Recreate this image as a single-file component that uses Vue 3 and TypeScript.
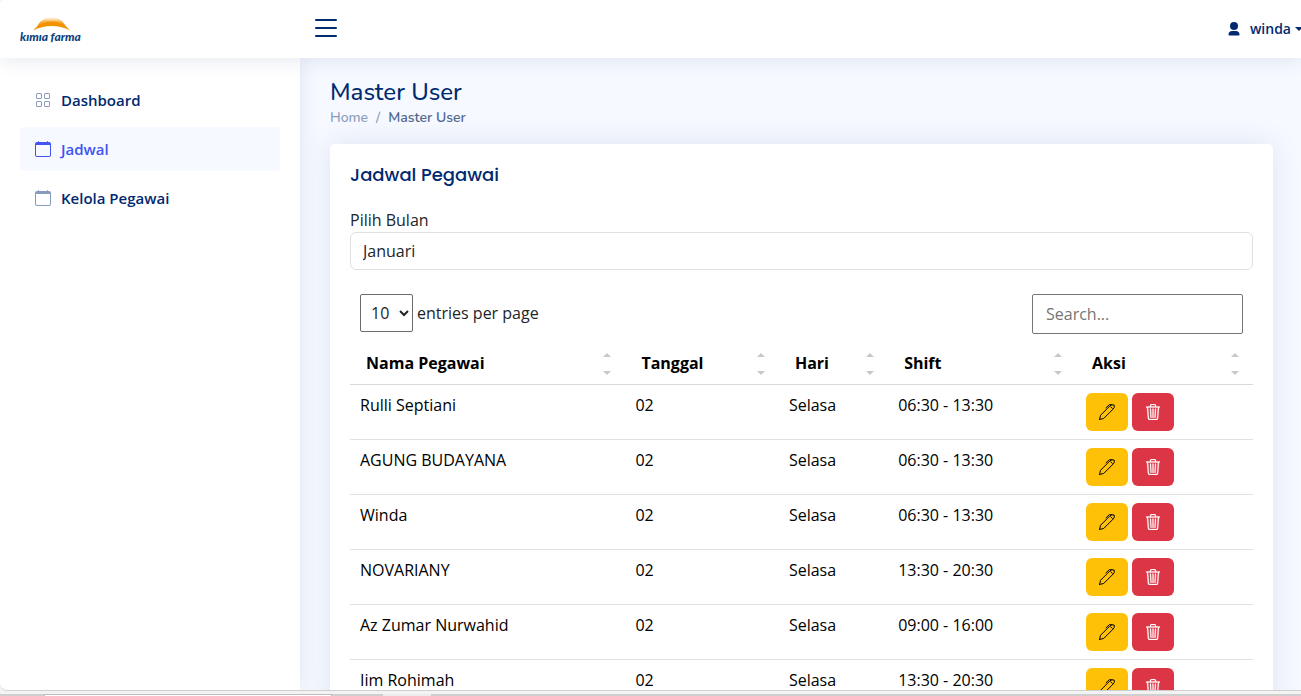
<script setup lang="ts">
import { ref } from 'vue'

interface Shift {
  name: string
  date: string
  day: string
  hours: string
}

const columns: string[] = ['Nama Pegawai', 'Tanggal', 'Hari', 'Shift', 'Aksi']

const shifts: Shift[] = [
  { name: 'Rulli Septiani', date: '02', day: 'Selasa', hours: '06:30 - 13:30' },
  { name: 'AGUNG BUDAYANA', date: '02', day: 'Selasa', hours: '06:30 - 13:30' },
  { name: 'Winda', date: '02', day: 'Selasa', hours: '06:30 - 13:30' },
  { name: 'NOVARIANY', date: '02', day: 'Selasa', hours: '13:30 - 20:30' },
  { name: 'Az Zumar Nurwahid', date: '02', day: 'Selasa', hours: '09:00 - 16:00' },
  { name: 'Iim Rohimah', date: '02', day: 'Selasa', hours: '13:30 - 20:30' },
]

const month = ref('Januari')
const perPage = ref('10')
const query = ref('')
const sidebarOpen = ref(true)
</script>

<template>
  <div class="window">
    <div class="viewport">
      <header class="header">
        <a href="#" class="logo" aria-label="kimia farma">
          <svg width="66" height="30" viewBox="0 0 66 30">
            <defs>
              <linearGradient id="glow" x1="0" y1="1" x2="0" y2="0">
                <stop offset="0.2" stop-color="#f39200" />
                <stop offset="0.6" stop-color="#f8b95c" />
                <stop offset="1" stop-color="#fdeac8" stop-opacity="0.4" />
              </linearGradient>
            </defs>
            <path d="M17 13C22 0 41 0 46 13C38 8 25 8 17 13Z" fill="url(#glow)" />
            <path d="M13 16.500C23 4.500 41 4.500 50 16.500C40 10.500 24 10.500 13 16.500Z" fill="#f39200" />
            <text x="0" y="27" class="logo-text">kımıa farma</text>
          </svg>
        </a>
        <button class="toggle" type="button" aria-label="Menu" @click="sidebarOpen = !sidebarOpen">
          <svg width="32" height="32" viewBox="0 0 16 16" fill="currentColor">
            <path d="M2.500 12a.5.5 0 0 1 .5-.5h10a.5.5 0 0 1 0 1H3a.5.5 0 0 1-.5-.5m0-4a.5.5 0 0 1 .5-.5h10a.5.5 0 0 1 0 1H3a.5.5 0 0 1-.5-.5m0-4a.5.5 0 0 1 .5-.5h10a.5.5 0 0 1 0 1H3a.5.5 0 0 1-.5-.5" />
          </svg>
        </button>
        <button class="profile" type="button">
          <svg width="16" height="16" viewBox="0 0 16 16" fill="currentColor">
            <circle cx="8" cy="5" r="4" />
            <path d="M2.500 13.500C2.500 11.200 4 10 6 10h4c2 0 3.500 1.200 3.500 3.500v.3c0 .5-.3.7-.7.700H3.200c-.4 0-.7-.2-.7-.7z" />
          </svg>
          <span>winda</span>
          <span class="caret"></span>
        </button>
      </header>

      <div class="body">
        <nav v-if="sidebarOpen" class="sidebar">
          <a href="#" class="nav-link">
            <svg width="16" height="16" viewBox="0 0 16 16" fill="currentColor">
              <path d="M1 2.500A1.500 1.500 0 0 1 2.500 1h3A1.500 1.500 0 0 1 7 2.500v3A1.500 1.500 0 0 1 5.500 7h-3A1.500 1.500 0 0 1 1 5.500zM2.500 2a.5.5 0 0 0-.5.5v3a.5.5 0 0 0 .5.5h3a.5.5 0 0 0 .5-.5v-3a.5.5 0 0 0-.5-.5zm6.500.5A1.500 1.500 0 0 1 10.500 1h3A1.500 1.500 0 0 1 15 2.500v3A1.500 1.500 0 0 1 13.500 7h-3A1.500 1.500 0 0 1 9 5.500zm1.500-.5a.5.5 0 0 0-.5.5v3a.5.5 0 0 0 .5.5h3a.5.5 0 0 0 .5-.5v-3a.5.5 0 0 0-.5-.5zM1 10.500A1.500 1.500 0 0 1 2.500 9h3A1.500 1.500 0 0 1 7 10.500v3A1.500 1.500 0 0 1 5.500 15h-3A1.500 1.500 0 0 1 1 13.500zm1.500-.5a.5.5 0 0 0-.5.5v3a.5.5 0 0 0 .5.5h3a.5.5 0 0 0 .5-.5v-3a.5.5 0 0 0-.5-.5zm6.500.5A1.500 1.500 0 0 1 10.500 9h3a1.500 1.500 0 0 1 1.500 1.500v3a1.500 1.500 0 0 1-1.500 1.500h-3A1.500 1.500 0 0 1 9 13.500zm1.500-.5a.5.5 0 0 0-.5.5v3a.5.5 0 0 0 .5.5h3a.5.5 0 0 0 .5-.5v-3a.5.5 0 0 0-.5-.5z" />
            </svg>
            <span>Dashboard</span>
          </a>
          <a href="#" class="nav-link active">
            <svg width="16" height="16" viewBox="0 0 16 16" fill="currentColor">
              <path d="M3.500 0a.5.5 0 0 1 .5.500V1h8V.5a.5.5 0 0 1 1 0V1h1a2 2 0 0 1 2 2v11a2 2 0 0 1-2 2H2a2 2 0 0 1-2-2V3a2 2 0 0 1 2-2h1V.5a.5.5 0 0 1 .5-.5M1 4v10a1 1 0 0 0 1 1h12a1 1 0 0 0 1-1V4z" />
            </svg>
            <span>Jadwal</span>
          </a>
          <a href="#" class="nav-link">
            <svg width="16" height="16" viewBox="0 0 16 16" fill="currentColor">
              <path d="M3.500 0a.5.5 0 0 1 .5.500V1h8V.5a.5.5 0 0 1 1 0V1h1a2 2 0 0 1 2 2v11a2 2 0 0 1-2 2H2a2 2 0 0 1-2-2V3a2 2 0 0 1 2-2h1V.5a.5.5 0 0 1 .5-.5M1 4v10a1 1 0 0 0 1 1h12a1 1 0 0 0 1-1V4z" />
            </svg>
            <span>Kelola Pegawai</span>
          </a>
        </nav>

        <main class="main">
          <h1>Master User</h1>
          <div class="breadcrumb">
            <a href="#">Home</a>
            <span class="slash">/</span>
            <span class="current">Master User</span>
          </div>

          <section class="card">
            <h2>Jadwal Pegawai</h2>
            <label class="field-label" for="month">Pilih Bulan</label>
            <select id="month" v-model="month" class="month">
              <option>Januari</option>
            </select>

            <div class="table-top">
              <label class="per-page">
                <select v-model="perPage">
                  <option>10</option>
                </select>
                <span>entries per page</span>
              </label>
              <input v-model="query" type="search" class="search" placeholder="Search..." aria-label="Search" />
            </div>

            <table>
              <colgroup>
                <col class="col-name" />
                <col class="col-date" />
                <col class="col-day" />
                <col class="col-shift" />
                <col class="col-action" />
              </colgroup>
              <thead>
                <tr>
                  <th v-for="column in columns" :key="column" scope="col">
                    <button type="button" class="sorter">
                      <span>{{ column }}</span>
                      <svg width="8" height="24" viewBox="0 0 8 24" fill="#c9c9c9">
                        <path d="M0 6L4 2L8 6ZM0 20H8L4 24Z" />
                      </svg>
                    </button>
                  </th>
                </tr>
              </thead>
              <tbody>
                <tr v-for="shift in shifts" :key="shift.name">
                  <td>{{ shift.name }}</td>
                  <td>{{ shift.date }}</td>
                  <td>{{ shift.day }}</td>
                  <td>{{ shift.hours }}</td>
                  <td>
                    <div class="actions">
                      <button type="button" class="btn edit" aria-label="Edit">
                        <svg width="16" height="16" viewBox="0 0 16 16" fill="none" stroke="currentColor" stroke-linejoin="round" stroke-linecap="round">
                          <path d="M0.600 15.400L1.500 11.300L11 1.800L12.700 0.700L15.200 1.100L15.300 3.300L14.200 5L4.700 14.500L0.600 15.400ZM7 3.800L10.300 0.700L12.700 0.900M11.700 2.800L13.200 4.300" />
                        </svg>
                      </button>
                      <button type="button" class="btn delete" aria-label="Hapus">
                        <svg width="16" height="16" viewBox="0 0 16 16" fill="currentColor" stroke="currentColor" stroke-width="0.300">
                          <path d="M6.500 1h3a.5.5 0 0 1 .5.500v1H6v-1a.5.5 0 0 1 .5-.5M11 2.500v-1A1.500 1.500 0 0 0 9.500 0h-3A1.500 1.500 0 0 0 5 1.500v1H1.500a.5.5 0 0 0 0 1h.538l.853 10.660A2 2 0 0 0 4.885 16h6.230a2 2 0 0 0 1.994-1.840l.853-10.660h.538a.5.5 0 0 0 0-1zm1.958 1-.846 10.580a1 1 0 0 1-.997.920h-6.230a1 1 0 0 1-.997-.920L3.042 3.500zm-7.487 1a.5.5 0 0 1 .528.470l.5 8.500a.5.5 0 0 1-.998.060L5 5.030a.5.5 0 0 1 .470-.530zm5.058 0a.5.5 0 0 1 .470.530l-.5 8.500a.5.5 0 1 1-.998-.060l.5-8.500a.5.5 0 0 1 .528-.470M8 4.500a.5.5 0 0 1 .5.500v8.500a.5.5 0 0 1-1 0V5a.5.5 0 0 1 .5-.5" />
                        </svg>
                      </button>
                    </div>
                  </td>
                </tr>
              </tbody>
            </table>
          </section>
        </main>
      </div>
    </div>
    <div class="taskbar"><span class="tab"></span><span class="tab-light"></span></div>
  </div>
</template>

<style>
body {
  margin: 0;
  overflow: hidden;
}
</style>

<style scoped>
* {
  box-sizing: border-box;
}

.window {
  display: flex;
  flex-direction: column;
  height: 100vh;
  background: #f3f3f3;
  font-family: "Open Sans", "Noto Sans", sans-serif;
  font-size: 16px;
  line-height: 24px;
  color: #212529;
}

.viewport {
  display: flex;
  flex: 1;
  flex-direction: column;
  min-height: 0;
  overflow: hidden;
  background: #f6f9ff;
  border-bottom: 1px solid #cfcfcf;
  border-radius: 4px 0 0 8px;
}

.taskbar {
  display: flex;
  flex: none;
  height: 2px;
  margin-top: 3px;
  padding-left: 44px;
  background: #cfcfcf;
}

.tab {
  width: 288px;
  margin-right: 51px;
  background: #fff;
  border: 1px solid #bdbdbd;
  border-bottom: 0;
}

.tab-light {
  width: 48px;
  background: #ececec;
}

button,
select,
input {
  font: inherit;
  color: inherit;
}

svg {
  display: block;
  flex: none;
}

a {
  text-decoration: none;
}

.header {
  position: relative;
  z-index: 2;
  display: flex;
  flex: none;
  align-items: center;
  height: 58px;
  padding-left: 20px;
  background: #fff;
  box-shadow: 0 2px 20px rgba(1, 41, 112, 0.1);
}

.logo {
  width: 290px;
}

.logo-text {
  font: italic 900 12px Lato, "Open Sans", sans-serif;
  fill: #0d3f7f;
}

.toggle {
  margin-bottom: 2px;
  padding: 0;
  color: #012970;
  background: none;
  border: 0;
}

.profile {
  display: flex;
  align-items: center;
  height: 24px;
  margin-left: auto;
  padding: 0;
  font-size: 14px;
  font-weight: 600;
  color: #012970;
  background: none;
  border: 0;
}

.profile svg {
  margin-right: 8px;
}

.caret {
  width: 6px;
  height: 4px;
  margin-left: 4px;
  background: currentColor;
  clip-path: polygon(0 0, 100% 0, 100% 50%, 66% 100%);
}

.body {
  display: flex;
  flex: 1;
  min-height: 0;
}

.sidebar {
  z-index: 1;
  display: flex;
  flex: none;
  flex-direction: column;
  gap: 5px;
  width: 300px;
  padding: 20px;
  background: #fff;
  box-shadow: 0 0 20px rgba(1, 41, 112, 0.1);
}

.nav-link {
  display: flex;
  gap: 10px;
  align-items: center;
  height: 44px;
  padding: 0 15px;
  font-size: 15px;
  font-weight: 600;
  color: #012970;
  border-radius: 4px;
}

.nav-link svg {
  color: #899bbd;
}

.nav-link.active,
.nav-link.active svg {
  color: #4154f1;
}

.nav-link.active {
  background: #f6f9ff;
}

.main {
  flex: 1;
  min-width: 0;
  padding: 20px 28px 0 30px;
}

h1 {
  margin: 0;
  font-family: Nunito, "Open Sans", sans-serif;
  font-size: 24px;
  font-weight: 500;
  line-height: 29px;
  color: #012970;
}

.breadcrumb {
  display: flex;
  gap: 8px;
  font-family: Nunito, "Open Sans", sans-serif;
  font-size: 14px;
  font-weight: 500;
  line-height: 21px;
  color: #899bbd;
}

.breadcrumb a {
  color: #899bbd;
}

.current {
  font-weight: 600;
  color: #51678f;
}

.card {
  margin-top: 16px;
  padding: 0 20px 20px;
  background: #fff;
  border-radius: 5px;
  box-shadow: 0 0 30px rgba(1, 41, 112, 0.1);
}

h2 {
  margin: 0;
  padding: 20px 0 22px;
  font-family: Poppins, Inter, sans-serif;
  font-size: 18px;
  font-weight: 500;
  line-height: 22px;
  color: #012970;
}

.field-label {
  display: block;
}

.month {
  display: block;
  width: 100%;
  height: 38px;
  padding: 0 12px;
  appearance: none;
  background: #fff;
  border: 1px solid #dee2e6;
  border-radius: 6px;
}

.table-top {
  display: flex;
  align-items: flex-start;
  justify-content: space-between;
  padding: 24px 10px 8px;
}

.per-page {
  display: flex;
  gap: 4px;
  align-items: center;
}

.per-page select {
  width: 53px;
  height: 38px;
  padding: 0 0 0 6px;
  background: #fff;
  border: 1px solid #6b6b6b;
  border-radius: 2px;
}

.search {
  width: 211px;
  height: 40px;
  padding: 0 13px;
  background: #fff;
  border: 1px solid #767676;
  border-radius: 2px;
}

.search::placeholder {
  color: #757575;
}

table {
  width: 100%;
  table-layout: fixed;
  border-collapse: collapse;
  color: #000;
}

.col-name {
  width: 30.5%;
}

.col-date {
  width: 17%;
}

.col-day {
  width: 12.1%;
}

.col-shift {
  width: 20.8%;
}

.col-action {
  width: 19.6%;
}

th {
  height: 42px;
  padding: 0 14px 0 16px;
  border-bottom: 1px solid #d9d9d9;
}

.sorter {
  display: flex;
  align-items: center;
  justify-content: space-between;
  width: 100%;
  padding: 0;
  font-weight: 700;
  background: none;
  border: 0;
}

td {
  height: 55px;
  padding: 8px 10px;
  vertical-align: top;
  border-bottom: 1px solid #dee2e6;
}

.actions {
  display: flex;
  gap: 4px;
}

.btn {
  display: flex;
  align-items: center;
  justify-content: center;
  width: 42px;
  height: 38px;
  padding: 0;
  border: 0;
  border-radius: 6px;
}

.edit {
  color: #000;
  background: #ffc107;
}

.delete {
  color: #fff;
  background: #dc3545;
}
</style>
